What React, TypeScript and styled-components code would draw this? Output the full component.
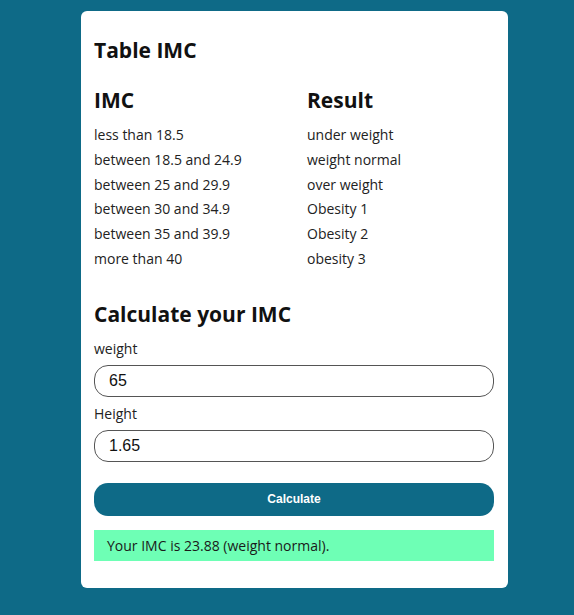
import React, { useState } from "react";
import styled, { createGlobalStyle } from "styled-components";

const GlobalStyle = createGlobalStyle`
  html, body {
    margin: 0;
    padding: 0;
    background: #0e6a87;
  }
  body {
    font-family: "Open Sans", "Noto Sans", sans-serif;
  }
  * { box-sizing: border-box; }
`;

const Page = styled.div`
  min-height: 615px;
  padding: 11px 0 0 81px;
`;

const Card = styled.div`
  width: 427px;
  background: #ffffff;
  border-radius: 6px;
  padding: 25px 14px 27px 13px;
`;

const Title = styled.h2`
  margin: 0 0 22px;
  font-size: 21px;
  line-height: 28px;
  font-weight: 700;
  color: #111;
`;

const Table = styled.div`
  display: grid;
  grid-template-columns: 213px 1fr;
`;

const HeadCell = styled.div`
  font-size: 21px;
  line-height: 28px;
  font-weight: 700;
  color: #111;
  margin-bottom: 9px;
`;

const Cell = styled.div`
  font-size: 14px;
  line-height: 24.8px;
  color: #222;
`;

const Section = styled.h2`
  margin: 28px 0 11px;
  font-size: 21px;
  line-height: 28px;
  font-weight: 700;
  color: #111;
`;

const Form = styled.form`
  display: flex;
  flex-direction: column;
`;

const Label = styled.label<{ $first?: boolean }>`
  font-size: 14px;
  line-height: 19px;
  color: #222;
  margin: ${(p) => (p.$first ? "0" : "7px")} 0 7px;
`;

const Input = styled.input`
  height: 32px;
  width: 100%;
  border: 1px solid #555;
  border-radius: 14px;
  padding: 0 14px;
  font-family: "Liberation Sans", Arial, sans-serif;
  font-size: 16px;
  color: #111;
  background: #fff;
  outline: none;
`;

const Button = styled.button`
  margin-top: 21px;
  height: 33px;
  width: 100%;
  border: none;
  border-radius: 14px;
  background: #0e6a87;
  color: #fff;
  font-family: "Liberation Sans", Arial, sans-serif;
  font-weight: 700;
  font-size: 12px;
  cursor: pointer;
`;

const Result = styled.div`
  margin-top: 14px;
  height: 31px;
  background: #6effb5;
  padding: 0 13px;
  display: flex;
  align-items: center;
  font-size: 14px;
  color: #1a1a1a;
`;

const rows: [string, string][] = [
  ["less than 18.5", "under weight"],
  ["between 18.5 and 24.9", "weight normal"],
  ["between 25 and 29.9", "over weight"],
  ["between 30 and 34.9", "Obesity 1"],
  ["between 35 and 39.9", "Obesity 2"],
  ["more than 40", "obesity 3"],
];

export default function App() {
  const [weight, setWeight] = useState("65");
  const [height, setHeight] = useState("1.65");
  return (
    <>
      <GlobalStyle />
      <Page>
        <Card>
          <Title>Table IMC</Title>
          <Table>
            <HeadCell>IMC</HeadCell>
            <HeadCell>Result</HeadCell>
            {rows.map(([a, b]) => (
              <React.Fragment key={a}>
                <Cell>{a}</Cell>
                <Cell>{b}</Cell>
              </React.Fragment>
            ))}
          </Table>
          <Section>Calculate your IMC</Section>
          <Form onSubmit={(e) => e.preventDefault()}>
            <Label $first>weight</Label>
            <Input value={weight} onChange={(e) => setWeight(e.target.value)} />
            <Label>Height</Label>
            <Input value={height} onChange={(e) => setHeight(e.target.value)} />
            <Button type="submit">Calculate</Button>
          </Form>
          <Result>Your IMC is 23.88 (weight normal).</Result>
        </Card>
      </Page>
    </>
  );
}
